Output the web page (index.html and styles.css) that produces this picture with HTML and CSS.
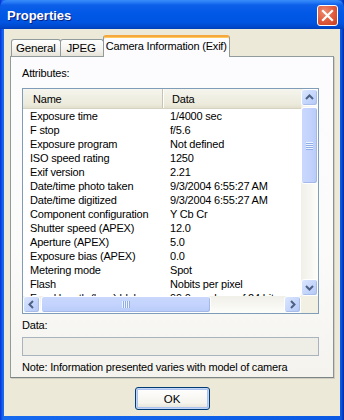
FILE: index.html
```html
<!DOCTYPE html>
<html lang="en">
<head>
  <meta charset="UTF-8">
  <title>Properties</title>
  <link rel="stylesheet" href="styles.css">
</head>
<body>
  <div class="window">
    <div class="titlebar">
      <span class="title">Properties</span>
      <div class="close">
        <svg width="13" height="13" viewBox="0 0 13 13"><path d="M2 2 L11 11 M11 2 L2 11" stroke="#fff" stroke-width="2.2" stroke-linecap="square"/></svg>
      </div>
    </div>

    <div class="client">
      <div class="tabs">
        <div class="tab tab-general">General</div>
        <div class="tab tab-jpeg">JPEG</div>
        <div class="tab active">Camera Information (Exif)</div>
      </div>

      <div class="panel">
        <div class="label">Attributes:</div>

        <div class="list">
          <div class="list-body">
            <div class="list-head">
              <div class="col-name">Name</div>
              <div class="col-data">Data</div>
            </div>
            <div class="row"><span>Exposure time</span><span>1/4000 sec</span></div>
            <div class="row"><span>F stop</span><span>f/5.6</span></div>
            <div class="row"><span>Exposure program</span><span>Not defined</span></div>
            <div class="row"><span>ISO speed rating</span><span>1250</span></div>
            <div class="row"><span>Exif version</span><span>2.21</span></div>
            <div class="row"><span>Date/time photo taken</span><span>9/3/2004 6:55:27 AM</span></div>
            <div class="row"><span>Date/time digitized</span><span>9/3/2004 6:55:27 AM</span></div>
            <div class="row"><span>Component configuration</span><span>Y Cb Cr</span></div>
            <div class="row"><span>Shutter speed (APEX)</span><span>12.0</span></div>
            <div class="row"><span>Aperture (APEX)</span><span>5.0</span></div>
            <div class="row"><span>Exposure bias (APEX)</span><span>0.0</span></div>
            <div class="row"><span>Metering mode</span><span>Spot</span></div>
            <div class="row"><span>Flash</span><span>Nobits per pixel</span></div>
            <div class="row"><span>Focal length (lens) blah</span><span>99.0 mm lens of 24 bit</span></div>
          </div>

          <div class="vscroll">
            <div class="sbtn">
              <svg width="15" height="15" viewBox="0 0 15 15"><path d="M4 9 L7.5 5.5 L11 9" fill="none" stroke="#4d6185" stroke-width="2"/></svg>
            </div>
            <div class="vthumb"><div class="grip-v"></div></div>
            <div class="track"></div>
            <div class="sbtn">
              <svg width="15" height="15" viewBox="0 0 15 15"><path d="M4 6 L7.5 9.5 L11 6" fill="none" stroke="#4d6185" stroke-width="2"/></svg>
            </div>
          </div>

          <div class="hscroll">
            <div class="sbtn">
              <svg width="15" height="15" viewBox="0 0 15 15"><path d="M9 4 L5.5 7.5 L9 11" fill="none" stroke="#4d6185" stroke-width="2"/></svg>
            </div>
            <div class="hthumb"><div class="grip-h"></div></div>
            <div class="track"></div>
            <div class="sbtn">
              <svg width="15" height="15" viewBox="0 0 15 15"><path d="M6 4 L9.5 7.5 L6 11" fill="none" stroke="#4d6185" stroke-width="2"/></svg>
            </div>
          </div>

          <div class="corner"></div>
        </div>

        <div class="label data-label">Data:</div>
        <div class="textbox"></div>
        <div class="note">Note: Information presented varies with model of camera</div>
      </div>

      <div class="buttons">
        <button class="ok">OK</button>
      </div>
    </div>
  </div>
</body>
</html>
```

FILE: styles.css
```css
body {
  margin: 0;
  font-family: "Liberation Sans", Arial, sans-serif;
  font-size: 11px;
  letter-spacing: -0.2px;
  color: #000;
  background: #fff;
}

.window {
  width: 344px;
  height: 420px;
  background: linear-gradient(90deg, #0831d9, #166aee 3px, #0a5ae4 341px, #0028a8);
  display: flex;
  flex-direction: column;
}

.titlebar {
  height: 29px;
  display: flex;
  align-items: center;
  justify-content: space-between;
  padding: 0 6px 0 7px;
  background: linear-gradient(#3b8cf8 0, #2a7ef6 2px, #0d5fe8 5px, #0058e6 14px, #0055e2 22px, #0048cc 27px, #0040b8 29px);
  border-radius: 7px 7px 0 0;
}

.title {
  color: #fff;
  font-weight: bold;
  font-size: 13px;
  letter-spacing: 0;
  text-shadow: 1px 1px #0a1f80;
  margin-top: 1px;
}

.close {
  width: 19px;
  height: 19px;
  border: 1px solid #fff;
  border-radius: 3px;
  background: radial-gradient(circle at 35% 30%, #ee8c70, #e0583a 55%, #c4401f);
  display: flex;
  align-items: center;
  justify-content: center;
  margin-top: 1px;
}

.client {
  margin: 0 4px 4px;
  flex: 1;
  background: #ece9d8;
  display: flex;
  flex-direction: column;
}

.tabs {
  display: flex;
  align-items: flex-end;
  height: 20px;
  margin: 7px 0 0 7px;
}

.tab {
  height: 16px;
  line-height: 17px;
  border: 1px solid #919b9c;
  border-bottom: none;
  border-radius: 3px 3px 0 0;
  background: linear-gradient(#fff, #f3f2ed 60%, #e6e4d9);
  font-size: 11.5px;
}

.tab-general {
  padding: 0 4px;
}

.tab-jpeg {
  padding: 0 7px 0 6px;
  margin-left: -1px;
}

.tab.active {
  position: relative;
  z-index: 1;
  height: 20px;
  line-height: 19px;
  margin-bottom: -1px;
  margin-left: -1px;
  padding: 0 2px;
  font-size: 11px;
  background: #fcfcfe;
  border-top: 2px solid #f5a83e;
  box-shadow: inset 0 1px #ffc95b;
}

.panel {
  margin: 0 6px;
  height: 322px;
  box-sizing: border-box;
  border: 1px solid #919b9c;
  border-right-color: #8a9293;
  border-bottom-color: #7d8485;
  box-shadow: 1px 1px #d0cec0;
  background: linear-gradient(#fcfcfe, #fbfbfa 60%, #f4f3ee);
  padding: 10px 15px 0 11px;
}

.label {
  height: 13px;
  line-height: 13px;
}

.list {
  margin-top: 8px;
  width: 297px;
  height: 226px;
  box-sizing: border-box;
  border: 1px solid #7f9db9;
  background: #fff;
  display: grid;
  grid-template-columns: 278px 17px;
  grid-template-rows: 207px 17px;
}

.list-body {
  overflow: hidden;
  white-space: nowrap;
}

.list-head {
  display: flex;
  height: 20px;
  line-height: 20px;
  background: linear-gradient(#f6f5ee, #ebeadb 80%, #e2dfcc);
  border-bottom: 1px solid #d6d2c2;
  box-sizing: border-box;
}

.col-name {
  width: 140px;
  padding-left: 10px;
  box-sizing: border-box;
  border-right: 1px solid #c7c5b2;
  box-shadow: 1px 0 #fff;
}

.col-data {
  padding-left: 9px;
}

.row {
  display: grid;
  grid-template-columns: 140px 1fr;
  height: 14px;
  line-height: 14px;
  padding-left: 7px;
}

.vscroll,
.hscroll {
  display: flex;
  background: linear-gradient(90deg, #f0efe8, #fdfdfa);
}

.vscroll {
  flex-direction: column;
}

.hscroll {
  background: linear-gradient(#f0efe8, #fdfdfa);
}

.track {
  flex: 1;
}

.sbtn {
  width: 17px;
  height: 17px;
  flex: none;
  box-sizing: border-box;
  border: 1px solid #fff;
  border-radius: 3px;
  background: linear-gradient(135deg, #dce7fd, #c2d4fb 60%, #b4c8f6);
  box-shadow: inset -1px -1px #a9bde9;
  display: flex;
  align-items: center;
  justify-content: center;
}

.sbtn svg {
  display: block;
}

.vthumb {
  margin-top: 1px;
  height: 77px;
  box-sizing: border-box;
  border: 1px solid #fff;
  border-radius: 3px;
  background: linear-gradient(90deg, #cad8fc, #c3d3fd 50%, #b8cbf8);
  box-shadow: inset -1px -1px #a5b9e8;
  display: flex;
  align-items: center;
  justify-content: center;
}

.hthumb {
  margin-left: 1px;
  width: 170px;
  box-sizing: border-box;
  border: 1px solid #fff;
  border-radius: 3px;
  background: linear-gradient(#cad8fc, #c3d3fd 50%, #b8cbf8);
  box-shadow: inset -1px -1px #a5b9e8;
  display: flex;
  align-items: center;
  justify-content: center;
}

.grip-v {
  width: 7px;
  height: 8px;
  background: repeating-linear-gradient(#eef4fe 0 1px, #8faee9 1px 2px);
}

.grip-h {
  width: 8px;
  height: 7px;
  background: repeating-linear-gradient(90deg, #eef4fe 0 1px, #8faee9 1px 2px);
}

.corner {
  background: #f2f0e3;
}

.data-label {
  margin-top: 5px;
}

.textbox {
  margin-top: 5px;
  width: 297px;
  height: 19px;
  box-sizing: border-box;
  border: 1px solid #a9b3bd;
  background: #efeee6;
}

.note {
  margin-top: 5px;
  height: 13px;
  line-height: 13px;
}

.buttons {
  display: flex;
  justify-content: center;
  padding-top: 9px;
}

.ok {
  width: 75px;
  height: 23px;
  font-family: "Liberation Sans", Arial, sans-serif;
  font-size: 11.5px;
  color: #000;
  border: 1px solid #003c74;
  border-radius: 3px;
  background: linear-gradient(#fff, #f5f4ee 70%, #e3e1d5);
  box-shadow: inset 0 0 0 1px #c3d4f6, inset 0 0 0 2px #a9c2ef;
  padding: 0;
}
```
